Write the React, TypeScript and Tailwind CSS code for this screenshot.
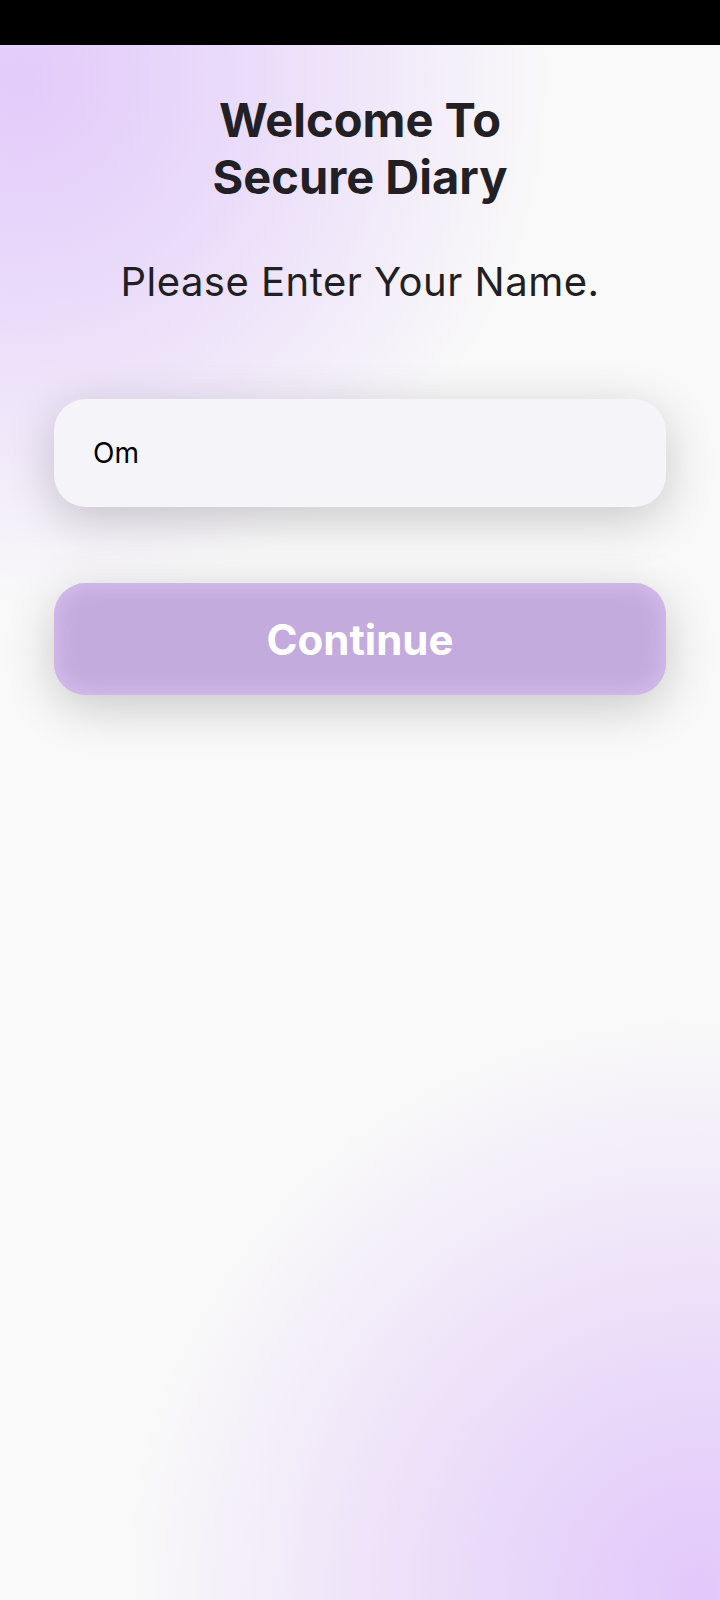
import React from "react";

export default function App() {
  return (
    <div className="w-full h-[1600px] flex flex-col bg-[#f9f9f9] font-['Inter','Noto_Sans',sans-serif]">
      <div className="h-[45px] w-full bg-black shrink-0" />
      <div className="flex-1 flex flex-col items-center bg-[radial-gradient(circle_at_20px_35px,#e3cbfa_0px,#eadbfa_220px,rgba(249,249,249,0)_530px),radial-gradient(circle_at_700px_1545px,#e2c8fb_0px,#ecdef9_270px,rgba(249,249,249,0)_575px)]">
        <h1 className="mt-[46px] text-center text-[47px] leading-[57px] font-bold text-[#221f25]">
          Welcome To
          <br />
          Secure Diary
        </h1>
        <p className="mt-[54px] text-center text-[40px] leading-[46px] tracking-[0.5px] text-[#211e24]">
          Please Enter Your Name.
        </p>
        <div className="mt-[94px] w-full px-[54px]">
          <input
            readOnly
            value="Om"
            className="w-full h-[108px] rounded-[32px] bg-[#f5f4f9] pl-[39px] text-[28px] text-black outline-none shadow-[0_12px_50px_rgba(0,0,0,0.2)] font-['Inter','Noto_Sans',sans-serif]"
          />
        </div>
        <div className="mt-[76px] w-full px-[54px]">
          <button className="w-full h-[112px] rounded-[32px] bg-[#c4abde] text-white text-[42px] font-bold shadow-[inset_0_0_24px_#d8c3f0,0_12px_50px_rgba(0,0,0,0.2)]">
            Continue
          </button>
        </div>
      </div>
    </div>
  );
}
